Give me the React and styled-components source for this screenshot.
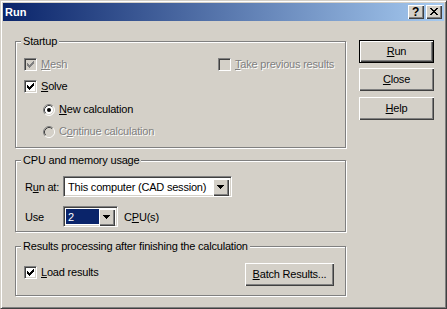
import React from 'react';
import styled, { createGlobalStyle, css } from 'styled-components';

const GlobalStyle = createGlobalStyle`
  html, body {
    margin: 0;
    padding: 0;
    background: #d4d0c8;
  }
  body {
    font-family: "Liberation Sans", Arial, sans-serif;
    font-size: 11px;
    letter-spacing: -0.2px;
    color: #000;
  }
`;

const raised = css`
  background: #d4d0c8;
  box-shadow: inset 1px 1px #fff, inset -1px -1px #404040, inset -2px -2px #808080;
`;

const sunken = css`
  border: 1px solid;
  border-color: #808080 #fff #fff #808080;
  box-shadow: inset 1px 1px #404040, inset -1px -1px #d4d0c8;
`;

const Frame = styled.div`
  box-sizing: border-box;
  width: 447px;
  height: 309px;
  background: #d4d0c8;
  border: 1px solid;
  border-color: #d4d0c8 #404040 #404040 #d4d0c8;
  box-shadow: inset 1px 1px #fff, inset -1px -1px #808080;
  padding: 2px;
  display: flex;
  flex-direction: column;
`;

const TitleBar = styled.div`
  height: 18px;
  flex: none;
  display: flex;
  align-items: center;
  justify-content: space-between;
  padding: 0 2px 0 2px;
  background: linear-gradient(to right, #0a246a, #a6caf0);
`;

const TitleText = styled.span`
  color: #fff;
  font-weight: bold;
  letter-spacing: 0;
  line-height: 18px;
`;

const CaptionButtons = styled.div`
  display: flex;
  gap: 2px;
`;

const CaptionButton = styled.div`
  ${raised};
  width: 16px;
  height: 14px;
  box-sizing: border-box;
  display: flex;
  align-items: center;
  justify-content: center;
  font-weight: bold;
  font-size: 12px;
  line-height: 14px;
  padding: 0 1px 1px 0;
`;

const Body = styled.div`
  flex: 1;
  display: flex;
  padding: 14px 0 0 12px;
`;

const Groups = styled.div`
  width: 331px;
  display: flex;
  flex-direction: column;
`;

const Group = styled.fieldset`
  box-sizing: border-box;
  height: ${(p) => p.$h}px;
  margin: ${(p) => p.$mt || 0}px 0 0 0;
  padding: 0 8px;
  min-width: 0;
  border: 1px solid #808080;
  box-shadow: 1px 1px 0 #fff, inset 1px 1px 0 #fff;
`;

const Caption = styled.legend`
  margin-left: -3px;
  padding: 0 2px;
  line-height: 13px;
  background: #d4d0c8;
`;

const Rows = styled.div`
  padding-top: ${(p) => p.$pt}px;
  display: flex;
  flex-direction: column;
`;

const Row = styled.div`
  display: flex;
  align-items: center;
  height: 13px;
  margin-top: ${(p) => p.$mt || 0}px;
  padding-left: ${(p) => p.$indent || 0}px;
`;

const TwoColumns = styled.div`
  display: grid;
  grid-template-columns: 194px auto;
  align-items: center;
  height: 13px;
`;

const Label = styled.span`
  margin-left: 4px;
  line-height: 13px;
  white-space: nowrap;
  ${(p) =>
    p.$disabled &&
    css`
      color: #808080;
      text-shadow: 1px 1px 0 #fff;
    `}
`;

const Key = styled.u`
  text-underline-offset: 1px;
`;

const Box = styled.span`
  ${sunken};
  box-sizing: border-box;
  width: 13px;
  height: 13px;
  flex: none;
  padding: 2px;
  background: ${(p) => (p.$disabled ? '#d4d0c8' : '#fff')};
  svg {
    display: block;
  }
`;

const CheckMark = ({ color }) => (
  <svg width="7" height="7" viewBox="0 0 7 7" shapeRendering="crispEdges">
    {[2, 3, 4, 3, 2, 1, 0].map((y, x) => (
      <rect key={x} x={x} y={y} width="1" height="3" fill={color} />
    ))}
  </svg>
);

const Check = ({ checked, disabled, children }) => (
  <Row as="label">
    <Box $disabled={disabled}>{checked && <CheckMark color={disabled ? '#808080' : '#000'} />}</Box>
    <Label $disabled={disabled}>{children}</Label>
  </Row>
);

const RadioDot = styled.svg`
  flex: none;
  display: block;
`;

const Radio = ({ checked, disabled, children, mt }) => (
  <Row $mt={mt} $indent={19}>
    <RadioDot width="12" height="12" viewBox="0 0 12 12">
      <circle cx="6" cy="6" r="5" fill={disabled ? '#d4d0c8' : '#fff'} />
      <path d="M2.11 9.89 A5.5 5.5 0 0 1 9.89 2.11" fill="none" stroke="#808080" />
      <path d="M9.89 2.11 A5.5 5.5 0 0 1 2.11 9.89" fill="none" stroke="#fff" />
      <path d="M2.82 9.18 A4.5 4.5 0 0 1 9.18 2.82" fill="none" stroke="#404040" />
      <path d="M9.18 2.82 A4.5 4.5 0 0 1 2.82 9.18" fill="none" stroke="#d4d0c8" />
      {checked && <circle cx="6" cy="6" r="2" fill="#000" />}
    </RadioDot>
    <Label $disabled={disabled}>{children}</Label>
  </Row>
);

const FieldRow = styled.div`
  display: grid;
  grid-template-columns: 38px auto 1fr;
  align-items: center;
  height: 21px;
  margin-top: ${(p) => p.$mt || 0}px;
  padding-left: 1px;
`;

const Combo = styled.div`
  ${sunken};
  box-sizing: border-box;
  width: ${(p) => p.$w}px;
  height: 21px;
  padding: 2px;
  background: #fff;
  display: flex;
`;

const Field = styled.div`
  flex: 1;
  padding-left: 2px;
  line-height: 17px;
  white-space: nowrap;
  overflow: hidden;
  ${(p) =>
    p.$selected &&
    css`
      background: #0a246a;
      color: #fff;
    `}
`;

const DropButton = styled.div`
  ${raised};
  width: 16px;
  height: 17px;
  flex: none;
  display: flex;
  align-items: center;
  justify-content: center;
  padding: 0 1px 1px 0;
  box-sizing: border-box;
`;

const Arrow = () => (
  <svg width="7" height="4" viewBox="0 0 7 4" shapeRendering="crispEdges">
    <path d="M0 0h7v1h-1v1h-1v1h-1v1h-1v-1h-1v-1h-1v-1h-1z" fill="#000" />
  </svg>
);

const Dropdown = ({ width, selected, children }) => (
  <Combo $w={width}>
    <Field $selected={selected}>{children}</Field>
    <DropButton>
      <Arrow />
    </DropButton>
  </Combo>
);

const Suffix = styled.span`
  margin-left: 6px;
`;

const ResultsRow = styled.div`
  display: flex;
  align-items: flex-start;
  justify-content: space-between;
  padding: 10px 3px 0 0;
  > label {
    margin-top: 3px;
  }
`;

const Buttons = styled.div`
  width: 75px;
  margin: 5px 0 0 13px;
  display: flex;
  flex-direction: column;
`;

const Button = styled.div`
  ${raised};
  box-sizing: border-box;
  width: ${(p) => p.$w || 75}px;
  height: 23px;
  margin-top: ${(p) => p.$mt || 0}px;
  display: flex;
  align-items: center;
  justify-content: center;
  padding-bottom: 1px;
  ${(p) =>
    p.$default &&
    css`
      border: 1px solid #000;
    `}
`;

const CloseGlyph = () => (
  <svg width="8" height="7" viewBox="0 0 8 7" shapeRendering="crispEdges">
    <path
      d="M0 0h2v1h1v1h2v-1h1v-1h2v1h-1v1h-1v1h-1v1h1v1h1v1h1v1h-2v-1h-1v-1h-2v1h-1v1h-2v-1h1v-1h1v-1h1v-1h-1v-1h-1v-1h-1z"
      fill="#000"
    />
  </svg>
);

export default function App() {
  return (
    <>
      <GlobalStyle />
      <Frame>
        <TitleBar>
          <TitleText>Run</TitleText>
          <CaptionButtons>
            <CaptionButton>?</CaptionButton>
            <CaptionButton>
              <CloseGlyph />
            </CaptionButton>
          </CaptionButtons>
        </TitleBar>
        <Body>
          <Groups>
            <Group $h={113}>
              <Caption>Startup</Caption>
              <Rows $pt={10}>
                <TwoColumns>
                  <Check checked disabled>
                    <Key>M</Key>esh
                  </Check>
                  <Check disabled>
                    <Key>T</Key>ake previous results
                  </Check>
                </TwoColumns>
                <Row $mt={9}>
                  <Check checked>
                    <Key>S</Key>olve
                  </Check>
                </Row>
                <Radio checked mt={10}>
                  <Key>N</Key>ew calculation
                </Radio>
                <Radio disabled mt={9}>
                  C<Key>o</Key>ntinue calculation
                </Radio>
              </Rows>
            </Group>
            <Group $h={78} $mt={6}>
              <Caption>CPU and memory usage</Caption>
              <Rows $pt={9}>
                <FieldRow>
                  <span>
                    R<Key>u</Key>n at:
                  </span>
                  <Dropdown width={169}>This computer (CAD session)</Dropdown>
                </FieldRow>
                <FieldRow $mt={9}>
                  <span>Use</span>
                  <Dropdown width={55} selected>
                    2
                  </Dropdown>
                  <Suffix>
                    C<Key>P</Key>U(s)
                  </Suffix>
                </FieldRow>
              </Rows>
            </Group>
            <Group $h={56} $mt={8}>
              <Caption>Results processing after finishing the calculation</Caption>
              <ResultsRow>
                <Check checked>
                  <Key>L</Key>oad results
                </Check>
                <Button $w={89}>
                  <span>
                    <Key>B</Key>atch Results...
                  </span>
                </Button>
              </ResultsRow>
            </Group>
          </Groups>
          <Buttons>
            <Button $default>
              <span>
                <Key>R</Key>un
              </span>
            </Button>
            <Button $mt={5}>
              <span>
                <Key>C</Key>lose
              </span>
            </Button>
            <Button $mt={6}>
              <span>
                <Key>H</Key>elp
              </span>
            </Button>
          </Buttons>
        </Body>
      </Frame>
    </>
  );
}
